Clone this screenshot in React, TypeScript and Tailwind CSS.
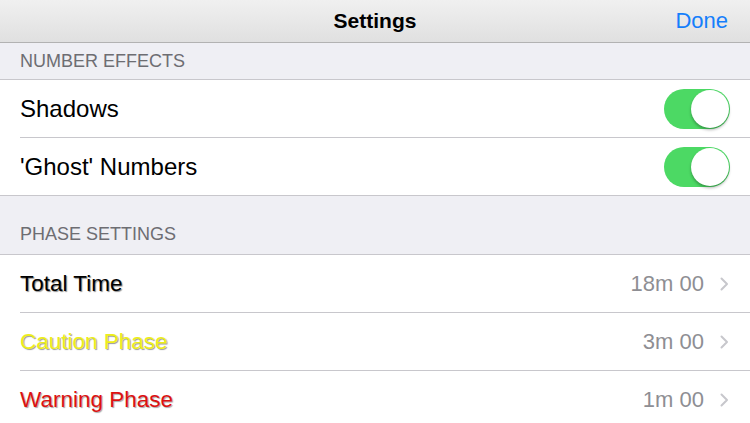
import React, { useState } from 'react';

type PhaseRow = {
  label: string;
  value: string;
  labelClass: string;
};

const phases: PhaseRow[] = [
  { label: 'Total Time', value: '18m 00', labelClass: 'text-black [text-shadow:1px_1px_1px_rgba(0,0,0,0.45)]' },
  { label: 'Caution Phase', value: '3m 00', labelClass: 'text-[#eeee1a] [text-shadow:1px_1px_1px_rgba(0,0,0,0.4)]' },
  { label: 'Warning Phase', value: '1m 00', labelClass: 'text-[#dd1111] [text-shadow:1px_1px_1px_rgba(0,0,0,0.35)]' },
];

const Toggle: React.FC<{ on: boolean; onChange: () => void }> = ({ on, onChange }) => (
  <button
    onClick={onChange}
    className={`relative flex h-[40px] w-[66px] items-center rounded-full p-[1px] ${on ? 'justify-end bg-[#4cd964]' : 'justify-start bg-[#e5e5ea]'}`}
  >
    <span className="block h-[38px] w-[38px] rounded-full bg-white shadow-[0_2px_3px_rgba(0,0,0,0.3)]" />
  </button>
);

const Chevron: React.FC = () => (
  <svg width="9" height="14" viewBox="0 0 9 14" className="ml-[16px]">
    <path d="M1.5 1.5 L7 7 L1.5 12.5" fill="none" stroke="#c7c7cc" strokeWidth="2" strokeLinecap="round" strokeLinejoin="round" />
  </svg>
);

const App: React.FC = () => {
  const [shadows, setShadows] = useState(true);
  const [ghosts, setGhosts] = useState(true);

  return (
    <div className="h-[423px] w-[750px] overflow-hidden bg-[#efeff4] font-['Liberation_Sans',Arial,sans-serif]">
      {/* Nav bar */}
      <header className="relative flex h-[43px] items-center justify-center border-b border-[#b2b2b2] bg-gradient-to-b from-[#f0f0f0] to-[#e0e0e0]">
        <h1 className="text-[21px] font-bold text-black">Settings</h1>
        <button className="absolute right-[22px] top-[4px] text-[22px] text-[#157efb]">Done</button>
      </header>

      {/* Number effects */}
      <div className="flex h-[36px] items-center px-[20px] text-[18px] text-[#6d6d72]">NUMBER EFFECTS</div>
      <section className="border-y border-[#c8c7cc] bg-white">
        <div className="flex h-[57px] items-center justify-between pl-[20px] pr-[20px]">
          <span className="text-[24px] text-black">Shadows</span>
          <Toggle on={shadows} onChange={() => setShadows(!shadows)} />
        </div>
        <div className="ml-[20px] h-px bg-[#c8c7cc]" />
        <div className="flex h-[57px] items-center justify-between pl-[20px] pr-[20px]">
          <span className="text-[24px] text-black">'Ghost' Numbers</span>
          <Toggle on={ghosts} onChange={() => setGhosts(!ghosts)} />
        </div>
      </section>

      {/* Phase settings */}
      <div className="flex h-[58px] items-end px-[20px] pb-[6px] text-[18px] text-[#6d6d72]">PHASE SETTINGS</div>
      <section className="border-t border-[#c8c7cc] bg-white">
        {phases.map((p, i) => (
          <React.Fragment key={p.label}>
            {i > 0 && <div className="ml-[20px] h-px bg-[#c8c7cc]" />}
            <div className="flex h-[57px] items-center justify-between pl-[20px] pr-[21px]">
              <span className={`text-[22.5px] ${p.labelClass}`}>{p.label}</span>
              <div className="flex items-center">
                <span className="text-[22px] text-[#8e8e93]">{p.value}</span>
                <Chevron />
              </div>
            </div>
          </React.Fragment>
        ))}
      </section>
    </div>
  );
};

export default App;
